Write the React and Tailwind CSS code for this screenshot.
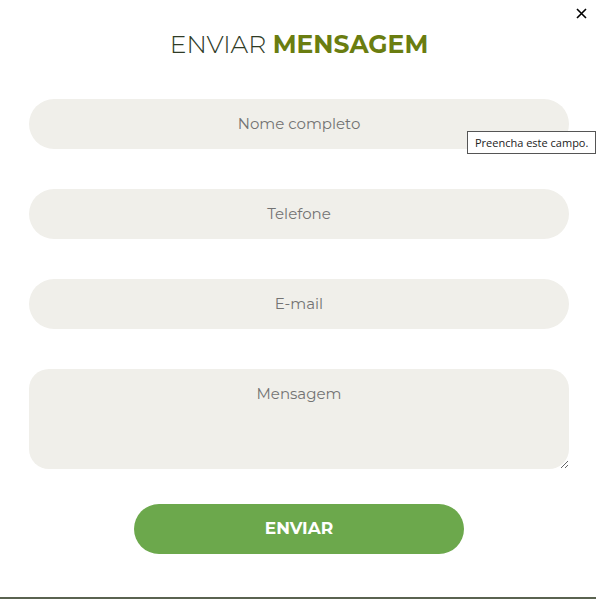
import React from 'react';

const font = { fontFamily: '"Montserrat", "Open Sans", "Liberation Sans", sans-serif' };

export default function App() {
    return (
        <div className="relative h-[599px] w-[596px] overflow-hidden bg-white" style={font}>
            {/* Close */}
            <button className="absolute right-[7px] top-[5px] flex h-[16px] w-[16px] items-center justify-center text-black">
                <svg width="11" height="11" viewBox="0 0 11 11">
                    <path d="M1 1L10 10M10 1L1 10" stroke="black" strokeWidth="1.6" />
                </svg>
            </button>

            <div className="flex flex-col items-center pl-[29px] pr-[27px] pt-[28px]">
                <h2 className="text-[25px] leading-[32px]">
                    <span className="font-light text-[#2f3b26]">ENVIAR </span>
                    <span className="font-bold text-[#6a7d10]">MENSAGEM</span>
                </h2>

                <form className="mt-[39px] flex w-full flex-col gap-[40px]">
                    <input
                        placeholder="Nome completo"
                        className="h-[50px] w-full rounded-full bg-[#f0efea] pb-[2px] text-center text-[15px] text-[#555] outline-none placeholder:text-[#737373]"
                    />
                    <input
                        placeholder="Telefone"
                        className="h-[50px] w-full rounded-full bg-[#f0efea] pb-[2px] text-center text-[15px] text-[#555] outline-none placeholder:text-[#737373]"
                    />
                    <input
                        placeholder="E-mail"
                        className="h-[50px] w-full rounded-full bg-[#f0efea] pb-[2px] text-center text-[15px] text-[#555] outline-none placeholder:text-[#737373]"
                    />
                    <textarea
                        placeholder="Mensagem"
                        className="block h-[100px] w-full rounded-[20px] bg-[#f0efea] pt-[14px] text-center text-[15px] text-[#555] outline-none placeholder:text-[#737373]"
                    />
                </form>

                <button className="mt-[35px] h-[50px] w-[330px] rounded-full bg-[#6ca84c] text-[17px] font-bold text-white">
                    ENVIAR
                </button>
            </div>

            {/* Validation tooltip */}
            <div
                className="absolute left-[467px] top-[131px] border border-[#555] bg-white px-[7px] py-[3px] text-[11px] leading-[15px] text-[#222] whitespace-nowrap"
                style={{ fontFamily: '"Open Sans", "Liberation Sans", sans-serif' }}
            >
                Preencha este campo.
            </div>

            <div className="absolute bottom-0 left-0 h-[2px] w-full bg-[#5a6350]" />
        </div>
    );
}
